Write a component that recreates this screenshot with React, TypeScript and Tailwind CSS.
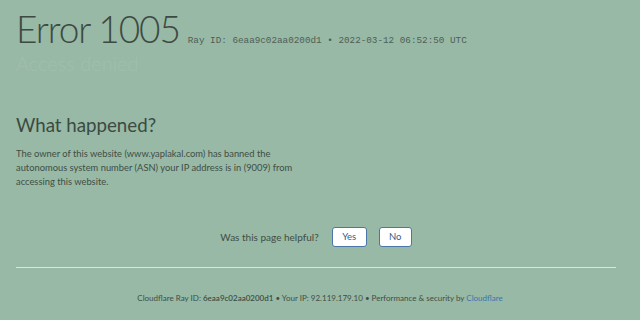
import React from 'react';

const App: React.FC = () => {
  return (
    <div className="w-[640px] h-[320px] overflow-hidden bg-[#98b9a5] text-[#3b4a42] font-['Lato',sans-serif]">
      {/* Header */}
      <div className="px-4 pt-[8px]">
        <div className="flex items-baseline">
          <h1 className="text-[37px] leading-[42px] font-light tracking-[-1.1px] text-[#3d4a43]">Error 1005</h1>
          <span className="ml-[8px] font-['Liberation_Mono',monospace] text-[9.3px] text-[#4f5f56]">
            Ray ID: 6eaa9c02aa0200d1 • 2022-03-12 06:52:50 UTC
          </span>
        </div>
        <h2 className="text-[20px] leading-[24px] font-light text-[#a2bfac] mt-[1px]">Access denied</h2>
      </div>

      {/* What happened */}
      <div className="px-4 mt-[37px]">
        <h2 className="text-[18.7px] leading-[26px] text-[#3b4a42]">What happened?</h2>
        <p className="mt-[9px] w-[300px] text-[9.35px] leading-[14px] text-[#3f4e46]">
          The owner of this website (www.yaplakal.com) has banned the autonomous system number (ASN) your IP address is in (9009) from accessing this website.
        </p>
      </div>

      {/* Feedback */}
      <div className="mt-[38px] flex items-center justify-center gap-[12px] pr-[8px]">
        <span className="text-[10px] text-[#3f4e46] mr-[1px]">Was this page helpful?</span>
        <button className="w-[35px] h-[20px] rounded-[3px] bg-white border border-[#4a77a8] text-[#2f5d8f] text-[9.5px]">Yes</button>
        <button className="w-[33px] h-[20px] rounded-[3px] bg-white border border-[#4a77a8] text-[#2f5d8f] text-[9.5px]">No</button>
      </div>

      {/* Divider */}
      <div className="mx-4 mt-[20px] h-[1px] w-[600px] bg-[#d6e8dc]" />

      {/* Footer */}
      <div className="mt-[24px] text-center text-[8px] text-[#3f4e46]">
        Cloudflare Ray ID: <span className="font-semibold">6eaa9c02aa0200d1</span> • Your IP: 92.119.179.10 • Performance &amp; security by{' '}
        <span className="text-[#3a74b0]">Cloudflare</span>
      </div>
    </div>
  );
};

export default App;
